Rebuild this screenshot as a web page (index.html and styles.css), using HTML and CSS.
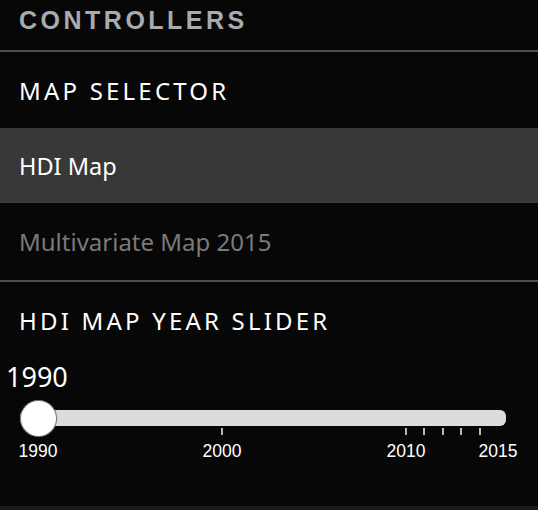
FILE: index.html
```html
<!DOCTYPE html>
<html>
<head>
<meta charset="utf-8">
<link rel="stylesheet" href="styles.css">
</head>
<body>
<div class="panel">
  <header class="panel-title">CONTROLLERS</header>
  <section class="section">
    <h2 class="section-title">MAP SELECTOR</h2>
  </section>
  <ul class="options">
    <li class="option active">HDI Map</li>
    <li class="option">Multivariate Map 2015</li>
  </ul>
  <section class="section slider-section">
    <h2 class="section-title">HDI MAP YEAR SLIDER</h2>
    <div class="value">1990</div>
    <div class="slider">
      <div class="track"></div>
      <div class="ticks">
        <span class="tick" style="left:0%"></span>
        <span class="tick" style="left:40%"></span>
        <span class="tick" style="left:80%"></span>
        <span class="tick" style="left:84%"></span>
        <span class="tick" style="left:88%"></span>
        <span class="tick" style="left:92%"></span>
        <span class="tick" style="left:96%"></span>
      </div>
      <div class="knob"></div>
      <div class="labels">
        <span class="label" style="left:0%">1990</span>
        <span class="label" style="left:40%">2000</span>
        <span class="label" style="left:80%">2010</span>
        <span class="label" style="left:100%">2015</span>
      </div>
    </div>
  </section>
  <div class="footer"></div>
</div>
</body>
</html>
```
FILE: styles.css
```css
html, body {
  margin: 0;
  padding: 0;
  background: #070707;
}
.panel {
  width: 538px;
  height: 510px;
  overflow: hidden;
  background: #070707;
  font-family: "Noto Sans", sans-serif;
  color: #fff;
}
.panel-title {
  height: 52px;
  box-sizing: border-box;
  padding: 5px 0 0 19px;
  font-family: "Liberation Sans", Arial, sans-serif;
  font-weight: bold;
  font-size: 25px;
  letter-spacing: 3.5px;
  color: #a8aaad;
  border-bottom: 2px solid #4b4f55;
  line-height: 30px;
}
.section {
  margin: 0;
}
.section-title {
  margin: 0;
  height: 76px;
  box-sizing: border-box;
  padding: 0 19px;
  display: flex;
  align-items: center;
  font-size: 24px;
  font-weight: 400;
  letter-spacing: 3.2px;
  color: #fff;
}
.options {
  list-style: none;
  margin: 0;
  padding: 0;
  border-bottom: 2px solid #4b4f55;
}
.option {
  height: 77px;
  display: flex;
  align-items: center;
  padding: 0 19px;
  font-size: 24px;
  color: #7a7a7a;
}
.option.active {
  background: #383838;
  color: #fff;
  height: 75px;
  font-size: 23.5px;
}
.slider-section {
  height: 224px;
  box-sizing: border-box;
}
.value {
  font-size: 27px;
  line-height: 30px;
  padding-left: 6px;
  margin-top: 4px;
}
.slider {
  position: relative;
  margin: 13px 0 0 38px;
  width: 460px;
  height: 60px;
}
.track {
  position: absolute;
  left: -18px;
  right: -8px;
  top: 5px;
  height: 16px;
  background: #dcdcdc;
  border-radius: 6px;
}
.knob {
  position: absolute;
  z-index: 2;
  left: -17px;
  top: -4px;
  width: 35px;
  height: 35px;
  border-radius: 50%;
  background: #fff;
  box-shadow: 0 0 0 1px #7a7a7a, 0 0 1px 1px rgba(120,120,120,0.5);
}
.ticks {
  position: absolute;
  left: 0;
  right: 0;
  top: 23px;
}
.tick {
  position: absolute;
  width: 2px;
  height: 7px;
  margin-left: -1px;
  background: #b8b8b8;
}
.labels {
  position: absolute;
  left: 0;
  right: 0;
  top: 36px;
}
.label {
  position: absolute;
  transform: translateX(-50%);
  font-family: "Liberation Sans", Arial, sans-serif;
  font-size: 17.5px;
  line-height: 20px;
  color: #fff;
}
.footer {
  height: 30px;
  background: #1a1b1a;
}
```
